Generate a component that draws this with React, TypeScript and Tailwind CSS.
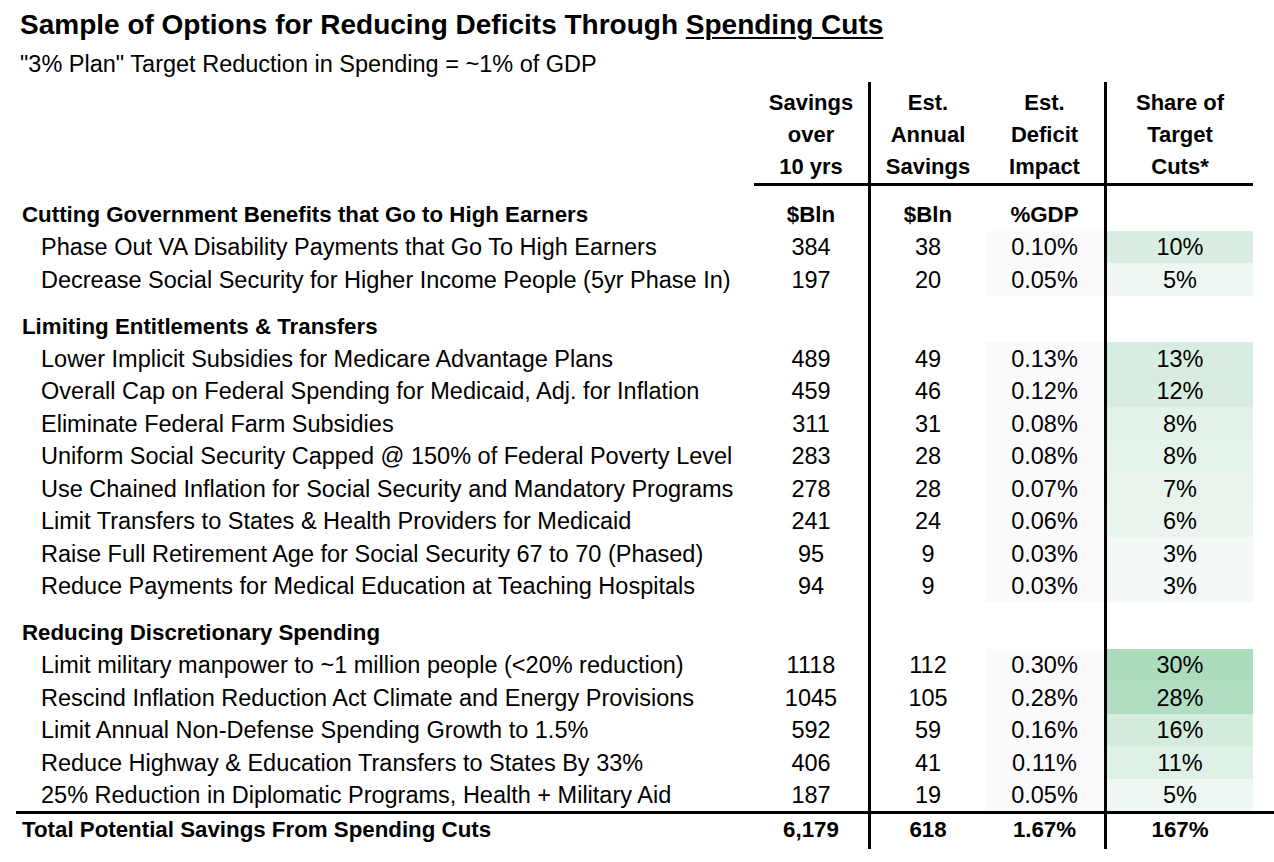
import React from "react";

type Item = {
  label: string;
  total: string;
  annual: string;
  pct: string;
  share: string;
  bg: string;
};

type Section = {
  title: string;
  units?: boolean;
  items: Item[];
};

const sections: Section[] = [
  {
    title: "Cutting Government Benefits that Go to High Earners",
    units: true,
    items: [
      { label: "Phase Out VA Disability Payments that Go To High Earners", total: "384", annual: "38", pct: "0.10%", share: "10%", bg: "bg-[#d9eee1]" },
      { label: "Decrease Social Security for Higher Income People (5yr Phase In)", total: "197", annual: "20", pct: "0.05%", share: "5%", bg: "bg-[#eef7f2]" },
    ],
  },
  {
    title: "Limiting Entitlements & Transfers",
    items: [
      { label: "Lower Implicit Subsidies for Medicare Advantage Plans", total: "489", annual: "49", pct: "0.13%", share: "13%", bg: "bg-[#d7ede0]" },
      { label: "Overall Cap on Federal Spending for Medicaid, Adj. for Inflation", total: "459", annual: "46", pct: "0.12%", share: "12%", bg: "bg-[#d8ede1]" },
      { label: "Eliminate Federal Farm Subsidies", total: "311", annual: "31", pct: "0.08%", share: "8%", bg: "bg-[#e4f3ea]" },
      { label: "Uniform Social Security Capped @ 150% of Federal Poverty Level", total: "283", annual: "28", pct: "0.08%", share: "8%", bg: "bg-[#e5f3ea]" },
      { label: "Use Chained Inflation for Social Security and Mandatory Programs", total: "278", annual: "28", pct: "0.07%", share: "7%", bg: "bg-[#e8f4ec]" },
      { label: "Limit Transfers to States & Health Providers for Medicaid", total: "241", annual: "24", pct: "0.06%", share: "6%", bg: "bg-[#eaf5ee]" },
      { label: "Raise Full Retirement Age for Social Security 67 to 70 (Phased)", total: "95", annual: "9", pct: "0.03%", share: "3%", bg: "bg-[#f4f9f8]" },
      { label: "Reduce Payments for Medical Education at Teaching Hospitals", total: "94", annual: "9", pct: "0.03%", share: "3%", bg: "bg-[#f4f9f8]" },
    ],
  },
  {
    title: "Reducing Discretionary Spending",
    items: [
      { label: "Limit military manpower to ~1 million people (<20% reduction)", total: "1118", annual: "112", pct: "0.30%", share: "30%", bg: "bg-[#acdcbe]" },
      { label: "Rescind Inflation Reduction Act Climate and Energy Provisions", total: "1045", annual: "105", pct: "0.28%", share: "28%", bg: "bg-[#b1dec2]" },
      { label: "Limit Annual Non-Defense Spending Growth to 1.5%", total: "592", annual: "59", pct: "0.16%", share: "16%", bg: "bg-[#d3ebdb]" },
      { label: "Reduce Highway & Education Transfers to States By 33%", total: "406", annual: "41", pct: "0.11%", share: "11%", bg: "bg-[#dff0e5]" },
      { label: "25% Reduction in Diplomatic Programs, Health + Military Aid", total: "187", annual: "19", pct: "0.05%", share: "5%", bg: "bg-[#eef7f2]" },
    ],
  },
];

const cols = "grid grid-cols-[738px_114px_117px_119px_149px]";

function SectionHeader({ section }: { section: Section }) {
  return (
    <div className={`${cols} h-[32.5px] items-stretch font-bold text-[22.3px]`}>
      <div className="pl-[6px] pt-[2px] flex items-center whitespace-nowrap">{section.title}</div>
      <div className="pt-[2px] flex items-center justify-center">{section.units ? "$Bln" : ""}</div>
      <div className="pt-[2px] flex items-center justify-center border-l-[3px] border-black">
        {section.units ? "$Bln" : ""}
      </div>
      <div className="pt-[2px] flex items-center justify-center">{section.units ? "%GDP" : ""}</div>
      <div className="border-l-[3px] border-black" />
    </div>
  );
}

function ItemRow({ item }: { item: Item }) {
  return (
    <div className={`${cols} h-[32.5px] items-stretch text-[23.5px]`}>
      <div className="pl-[25px] pt-[2px] flex items-center whitespace-nowrap">{item.label}</div>
      <div className="pt-[2px] flex items-center justify-center">{item.total}</div>
      <div className="pt-[2px] flex items-center justify-center border-l-[3px] border-black">{item.annual}</div>
      <div className="pt-[2px] flex items-center justify-center bg-[#fafafd]">{item.pct}</div>
      <div className="flex border-l-[3px] border-black">
        <div className={`pt-[2px] flex-1 flex items-center justify-center ${item.bg}`}>{item.share}</div>
      </div>
    </div>
  );
}

function Spacer({ h }: { h: string }) {
  return (
    <div className={`${cols} ${h}`}>
      <div />
      <div />
      <div className="border-l-[3px] border-black" />
      <div />
      <div className="border-l-[3px] border-black" />
    </div>
  );
}

export default function App() {
  return (
    <main className="min-h-screen w-[1274px] bg-white text-black font-['Liberation_Sans',Arial,sans-serif] leading-none">
      <div className="pl-[20px] pt-[9px]">
        <h1 className="h-[32px] flex items-center text-[28px] font-bold whitespace-nowrap">
          Sample of Options for Reducing Deficits Through&nbsp;
          <span className="underline decoration-2 underline-offset-[3px]">Spending Cuts</span>
        </h1>
        <p className="h-[26px] mt-[11px] flex items-center text-[23.5px] whitespace-nowrap">
          "3% Plan" Target Reduction in Spending = ~1% of GDP
        </p>
      </div>

      <div className="pl-[16px] mt-[4px]">
        {/* column headings */}
        <div className={`${cols} font-bold text-[22px] leading-[32px]`}>
          <div />
          <div className="pt-[5px] text-center border-b-[3px] border-black">
            Savings<br />over<br />10 yrs
          </div>
          <div className="pt-[5px] text-center border-b-[3px] border-l-[3px] border-black">
            Est.<br />Annual<br />Savings
          </div>
          <div className="pt-[5px] text-center border-b-[3px] border-black">
            Est.<br />Deficit<br />Impact
          </div>
          <div className="pt-[5px] text-center border-b-[3px] border-l-[3px] border-black">
            Share of<br />Target<br />Cuts*
          </div>
        </div>

        <Spacer h="h-[12px]" />
        {sections.map((section, i) => (
          <React.Fragment key={section.title}>
            {i > 0 && <Spacer h="h-[14px]" />}
            <SectionHeader section={section} />
            {section.items.map((item) => (
              <ItemRow key={item.label} item={item} />
            ))}
          </React.Fragment>
        ))}

        {/* total row */}
        <div className={`${cols} h-[38px] font-bold text-[22.3px] border-t-[3px] border-black`}>
          <div className="pl-[6px] pb-[2px] flex items-center whitespace-nowrap">
            Total Potential Savings From Spending Cuts
          </div>
          <div className="pb-[2px] flex items-center justify-center">6,179</div>
          <div className="pb-[2px] flex items-center justify-center border-l-[3px] border-black">618</div>
          <div className="pb-[2px] flex items-center justify-center">1.67%</div>
          <div className="pb-[2px] flex items-center justify-center border-l-[3px] border-black">167%</div>
        </div>
      </div>
    </main>
  );
}
